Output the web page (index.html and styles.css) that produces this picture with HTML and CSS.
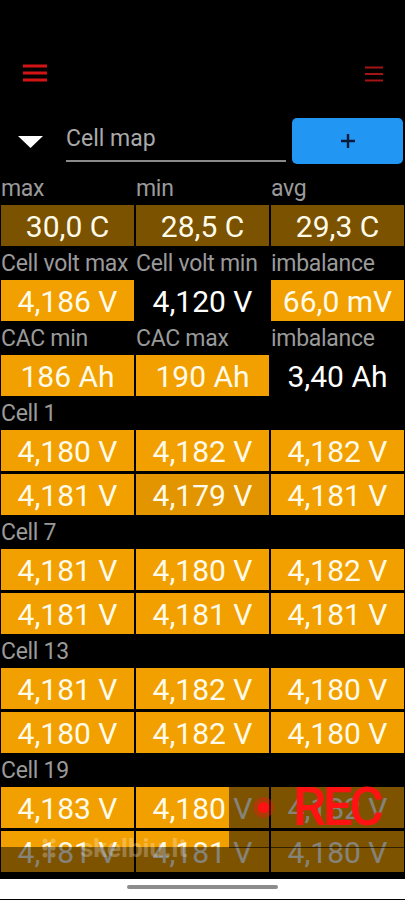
FILE: index.html
```html
<!DOCTYPE html>
<html lang="en">
  <head>
    <meta charset="utf-8" />
    <meta name="viewport" content="width=device-width, initial-scale=1.0" />
    <link rel="stylesheet" href="styles.css">
    <title>Cell map</title>
  </head>

  <body>
    <div class="screen">
      <div class="statusbar"></div>

      <div class="toolbar">
        <svg class="menu" width="24" height="18" viewBox="0 0 24 18">
          <path d="M0 2h24M0 9h24M0 16h24" stroke="#d41414" stroke-width="3" />
        </svg>
        <svg class="menu menu-right" width="18" height="18" viewBox="0 0 18 18">
          <path d="M0 2.5h18M0 9h18M0 15.5h18" stroke="#a51414" stroke-width="2" />
        </svg>
      </div>

      <div class="searchrow">
        <svg class="caret" width="25" height="12" viewBox="0 0 25 12">
          <polygon points="0,0 25,0 12.5,12" fill="#fff" />
        </svg>
        <div class="field">Cell map</div>
        <button class="addbtn">
          <svg width="14" height="14" viewBox="0 0 14 14">
            <path d="M7 0v14M0 7h14" stroke="#0b1a3a" stroke-width="2.4" />
          </svg>
        </button>
      </div>

      <div class="cells">
        <div class="labels"><span>max</span><span>min</span><span>avg</span></div>
        <div class="row">
          <div class="cell temp">30,0 C</div>
          <div class="cell temp">28,5 C</div>
          <div class="cell temp">29,3 C</div>
        </div>

        <div class="labels"><span>Cell volt max</span><span>Cell volt min</span><span>imbalance</span></div>
        <div class="row">
          <div class="cell">4,186 V</div>
          <div class="cell plain">4,120 V</div>
          <div class="cell">66,0 mV</div>
        </div>

        <div class="labels"><span>CAC min</span><span>CAC max</span><span>imbalance</span></div>
        <div class="row">
          <div class="cell">186 Ah</div>
          <div class="cell">190 Ah</div>
          <div class="cell plain">3,40 Ah</div>
        </div>

        <div class="title">Cell 1</div>
        <div class="row">
          <div class="cell">4,180 V</div>
          <div class="cell">4,182 V</div>
          <div class="cell">4,182 V</div>
          <div class="cell">4,181 V</div>
          <div class="cell low">4,179 V</div>
          <div class="cell">4,181 V</div>
        </div>

        <div class="title">Cell 7</div>
        <div class="row">
          <div class="cell">4,181 V</div>
          <div class="cell">4,180 V</div>
          <div class="cell">4,182 V</div>
          <div class="cell">4,181 V</div>
          <div class="cell">4,181 V</div>
          <div class="cell">4,181 V</div>
        </div>

        <div class="title">Cell 13</div>
        <div class="row">
          <div class="cell">4,181 V</div>
          <div class="cell">4,182 V</div>
          <div class="cell">4,180 V</div>
          <div class="cell">4,180 V</div>
          <div class="cell">4,182 V</div>
          <div class="cell">4,180 V</div>
        </div>

        <div class="title">Cell 19</div>
        <div class="row">
          <div class="cell">4,183 V</div>
          <div class="cell">4,180 V</div>
          <div class="cell">4,182 V</div>
          <div class="cell">4,181 V</div>
          <div class="cell">4,181 V</div>
          <div class="cell">4,180 V</div>
        </div>
      </div>

      <div class="navbar"><div class="homebar"></div></div>

      <!-- recorder overlay on top of the last rows -->
      <div class="shade shade-right"><div class="shade-line"></div></div>
      <div class="shade shade-left"></div>
      <div class="watermark">
        <svg width="22" height="22" viewBox="0 0 22 22">
          <circle cx="5" cy="4" r="2.5" fill="#fff" />
          <circle cx="13" cy="4" r="2.5" fill="#fff" />
          <circle cx="5" cy="11" r="2.5" fill="#fff" />
          <circle cx="13" cy="11" r="2.5" fill="#fff" />
          <circle cx="5" cy="18" r="2.5" fill="#fff" />
          <circle cx="13" cy="18" r="2.5" fill="#fff" />
        </svg>
        <span>skelbiu.lt</span>
      </div>
      <div class="rec"><span class="recdot"></span>REC</div>
    </div>
  </body>
</html>
```

FILE: styles.css
```css
body {
  margin: 0;
  background-color: #000;
  font-family: Roboto, "Noto Sans", sans-serif;
}

.screen {
  position: relative;
  width: 405px;
  height: 900px;
  overflow: hidden;
  background: #000;
}

.statusbar {
  height: 64px;
}

.toolbar {
  display: flex;
  justify-content: space-between;
  align-items: flex-start;
  height: 18px;
  padding: 0 22px 0 23px;
}

.menu-right {
  margin-top: 1px;
}

.searchrow {
  display: flex;
  align-items: center;
  height: 46px;
  margin-top: 36px;
  margin-bottom: 7px;
}

.caret {
  margin-left: 18px;
  margin-top: 2px;
}

.field {
  box-sizing: border-box;
  width: 220px;
  height: 44px;
  margin-left: 23px;
  align-self: flex-start;
  display: flex;
  align-items: flex-end;
  padding-bottom: 8px;
  border-bottom: 2px solid #8a8a8a;
  color: #a9a9a9;
  font-size: 23px;
  line-height: 26px;
}

.addbtn {
  width: 111px;
  height: 46px;
  margin-left: 6px;
  border: none;
  border-radius: 5px;
  background: #2196f3;
  display: flex;
  align-items: center;
  justify-content: center;
  padding: 0;
}

.cells {
  padding: 0 1px 7px 1px;
}

.labels,
.row {
  display: grid;
  grid-template-columns: 133px 133px 133px;
  column-gap: 2px;
}

.row {
  row-gap: 3px;
}

.labels span,
.title {
  box-sizing: border-box;
  height: 34px;
  padding-top: 2px;
  line-height: 32px;
  font-size: 23px;
  color: #9a9a9a;
  white-space: nowrap;
  letter-spacing: -0.3px;
}

.cell {
  box-sizing: border-box;
  height: 41px;
  padding-top: 3px;
  line-height: 38px;
  text-align: center;
  font-size: 30px;
  color: #fffbea;
  background: #f2a000;
}

.cell.low {
  background: #e39500;
}

.cell.temp {
  background: #7a5200;
}

.cell.plain {
  background: transparent;
  color: #fff;
}

.navbar {
  height: 20px;
  background: #fff;
  display: flex;
  justify-content: center;
  padding-top: 6px;
  box-sizing: border-box;
}

.homebar {
  width: 151px;
  height: 4px;
  border-radius: 2px;
  background: #8c8c8c;
}

.shade {
  position: absolute;
  background: rgba(0, 0, 0, 0.48);
}

.shade-right {
  left: 229px;
  top: 787px;
  width: 176px;
  height: 85px;
}

.shade-line {
  margin-top: 60px;
  height: 1px;
  background: rgba(0, 0, 0, 0.6);
}

.shade-left {
  left: 0;
  top: 847px;
  width: 229px;
  height: 25px;
}

.watermark {
  position: absolute;
  left: 40px;
  top: 833px;
  display: flex;
  align-items: center;
  gap: 18px;
  opacity: 0.25;
  color: #fff;
  font-size: 26px;
  font-weight: 700;
}

.rec {
  position: absolute;
  left: 252px;
  top: 781px;
  display: flex;
  align-items: center;
  color: #ff1212;
  font-size: 53px;
  font-weight: 500;
  line-height: 52px;
  letter-spacing: -3.5px;
}

.recdot {
  width: 11px;
  height: 11px;
  margin: 0 24px 0 6px;
  border-radius: 50%;
  background: #ff1212;
  box-shadow: 0 0 0 5px rgba(255, 18, 18, 0.35);
}
```
